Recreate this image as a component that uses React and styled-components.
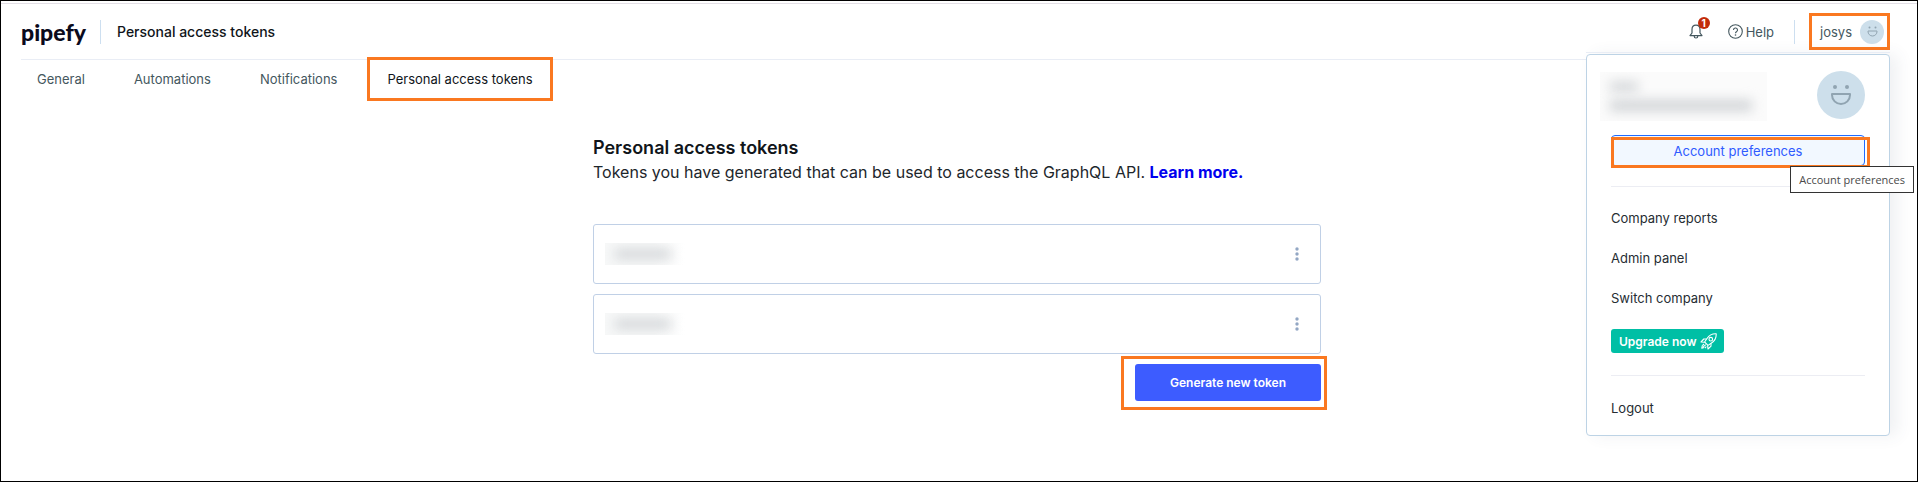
import React from 'react'
import styled, { createGlobalStyle } from 'styled-components'

const GlobalStyle = createGlobalStyle`
  * { box-sizing: border-box; }
  body {
    margin: 0;
    background-color: #fff;
    font-family: Inter, "Liberation Sans", sans-serif;
    color: #10151a;
  }
  button { font-family: inherit; cursor: pointer; }
  a { text-decoration: none; }
`

const Page = styled.div`
  position: relative;
  min-height: 100vh;
  border: 1px solid #000;
  padding: 2px 4px 0 0;
`

const TopLine = styled.div`
  height: 1px;
  margin-right: -4px;
  background-color: #e3dfe6;
`

const Header = styled.header`
  display: flex;
  align-items: center;
  height: 56px;
  margin: 0 23px 0 20px;
  border-bottom: 1px solid #e9edf5;
`

const Logo = styled.a`
  width: 79px;
  font-family: Lato, sans-serif;
  font-size: 23px;
  font-weight: 900;
  line-height: 30px;
  color: #0b0a1c;
`

const Divider = styled.span`
  width: 1px;
  height: 24px;
  background-color: #cddff0;
`

const PageName = styled.h1`
  flex: 1;
  margin: 0 0 0 16px;
  font-size: 14px;
  font-weight: 500;
  line-height: 20px;
`

const BellButton = styled.button`
  position: relative;
  display: flex;
  padding: 0;
  margin-right: 25px;
  border: none;
  background: none;
`

const Badge = styled.span`
  position: absolute;
  top: -7px;
  right: -7px;
  width: 12px;
  height: 12px;
  border-radius: 50%;
  background-color: #c22b0a;
  color: #fff;
  font-size: 10px;
  font-weight: 700;
  line-height: 12px;
  text-align: center;
`

const HelpLink = styled.a`
  display: flex;
  align-items: center;
  gap: 3px;
  margin-right: 20px;
  font-size: 13px;
  line-height: 20px;
  color: #44575e;
`

const UserButton = styled.button`
  display: flex;
  align-items: center;
  gap: 8px;
  height: 37px;
  margin-left: 14px;
  padding: 0 3px 0 8px;
  border: 3px solid #fa7820;
  background: none;
  font-size: 13px;
  line-height: 20px;
  color: #44575e;
`

const Avatar = styled.span`
  display: flex;
  align-items: center;
  justify-content: center;
  width: ${({ $size }) => $size}px;
  height: ${({ $size }) => $size}px;
  border-radius: 50%;
  background-color: #cddfeb;
`

const Tabs = styled.nav`
  display: flex;
  align-items: center;
  height: 44px;
  margin: -3px 20px 0;
`

const Tab = styled.a`
  padding: 0 16px;
  margin-right: 17px;
  font-size: 13px;
  line-height: 20px;
  color: #44575e;
`

const ActiveTab = styled(Tab)`
  margin: 0 0 0 -3px;
  padding: 9px 17px;
  border: 3px solid #fa7820;
  background-color: #fff;
  color: #10151a;
`

const Content = styled.main`
  width: 728px;
  margin: 35px auto 0;
`

const Title = styled.h2`
  margin: 0;
  font-size: 18px;
  font-weight: 600;
  line-height: 24px;
`

const Description = styled.p`
  margin: 0 0 40px;
  font-size: 16px;
  line-height: 24px;
  color: #1d262b;

  a {
    font-weight: 700;
    color: #0000ee;
  }
`

const TokenList = styled.ul`
  display: grid;
  gap: 10px;
  margin: 0;
  padding: 0;
  list-style: none;
`

const TokenRow = styled.li`
  display: flex;
  align-items: center;
  justify-content: space-between;
  height: 60px;
  padding: 0 11px;
  border: 1px solid #c0d0e6;
  border-radius: 3px;
`

const HiddenName = styled.div`
  width: 80px;
  height: 22px;
  overflow: hidden;
  background: linear-gradient(90deg, #f7f8f8 60%, #fff);

  &::after {
    content: "";
    display: block;
    width: 56px;
    height: 10px;
    margin: 6px 10px;
    background-color: #d3d6d9;
    filter: blur(6px);
  }
`

const MenuButton = styled.button`
  display: flex;
  justify-content: center;
  width: 24px;
  padding: 0;
  border: none;
  background: none;
`

const GenerateArea = styled.div`
  width: 206px;
  margin: 2px -6px 0 auto;
  padding: 5px 3px 6px 11px;
  border: 3px solid #fa7820;
`

const GenerateButton = styled.button`
  display: block;
  width: 100%;
  height: 37px;
  border: none;
  border-radius: 3px;
  background-color: #3d5cff;
  color: #fff;
  font-size: 12px;
  font-weight: 600;
`

const UserMenu = styled.aside`
  position: absolute;
  top: 53px;
  right: 27px;
  width: 304px;
  padding: 16px 24px 17px;
  border: 1px solid #bdd3e5;
  border-radius: 4px;
  background-color: #fff;
  box-shadow: 8px 0 16px rgba(60, 80, 100, 0.08);

  &::before {
    content: "";
    position: absolute;
    top: -3px;
    left: -1px;
    right: -1px;
    height: 1px;
    background-color: #e9edf5;
  }
`

const Profile = styled.div`
  display: flex;
  justify-content: space-between;
  margin-left: -11px;
`

const HiddenProfile = styled.div`
  width: 167px;
  height: 49px;
  margin-top: 1px;
  padding: 10px;
  overflow: hidden;
  background-color: #fbfbfb;

  &::before,
  &::after {
    content: "";
    display: block;
    width: 28px;
    height: 9px;
    background-color: #d0d3d6;
    filter: blur(6px);
  }

  &::after {
    width: 142px;
    height: 11px;
    margin-top: 9px;
  }
`

const PreferencesArea = styled.div`
  position: relative;
  margin-top: 14px;

  &::after {
    content: "";
    position: absolute;
    top: 2px;
    left: 0;
    right: -5px;
    bottom: -2px;
    border: 3px solid #fa7820;
    pointer-events: none;
  }
`

const PreferencesButton = styled.button`
  display: block;
  width: 100%;
  height: 31px;
  padding: 0;
  border: 1px solid #1f6bff;
  border-radius: 4px;
  background-color: #f2f8ff;
  color: #2f5bff;
  font-size: 13px;
  line-height: 20px;
`

const Tooltip = styled.span`
  position: absolute;
  top: 31px;
  right: -49px;
  z-index: 1;
  padding: 2px 8px;
  border: 1px solid #333;
  background-color: #fff;
  color: #4a4a4a;
  font-family: "Open Sans", sans-serif;
  font-size: 11px;
  line-height: 21px;
  white-space: nowrap;
`

const Line = styled.hr`
  height: 1px;
  margin: ${({ $margin }) => $margin};
  border: none;
  background-color: #ecedf3;
`

const MenuLinks = styled.nav`
  display: grid;
  gap: 20px;
  justify-items: start;
`

const MenuLink = styled.a`
  font-size: 13px;
  line-height: 20px;
  color: #262d33;
`

const Upgrade = styled.button`
  display: flex;
  align-items: center;
  gap: 3px;
  height: 24px;
  margin-top: 21px;
  padding: 0 7px 0 8px;
  border: none;
  border-radius: 3px;
  background-color: #00bfa5;
  color: #fff;
  font-size: 12px;
  font-weight: 600;
`

const Face = ({ size }) => (
  <svg width={size} height={size} viewBox="0 0 22 22" fill="none" stroke="#90a4b1" strokeWidth="2">
    <circle cx="5" cy="3" r="2" fill="#90a4b1" stroke="none" />
    <circle cx="17" cy="3" r="2" fill="#90a4b1" stroke="none" />
    <path d="M2 10h18v1a9 9 0 0 1-18 0z" strokeLinejoin="round" />
  </svg>
)

const Bell = () => (
  <svg width="14" height="15" viewBox="0 0 14 15" fill="none" stroke="#44575e" strokeWidth="1.2">
    <path d="M7 1.2C4.2 1.2 3 3 3 5.4V9L1 11.6h12L11 9V5.4C11 3 9.8 1.2 7 1.2zM5.2 12.2a1.8 1.8 0 0 0 3.6 0" strokeLinejoin="round" />
  </svg>
)

const Question = () => (
  <svg width="15" height="15" viewBox="0 0 15 15" fill="none" stroke="#44575e" strokeWidth="1.1">
    <circle cx="7.5" cy="7.5" r="6.8" />
    <path d="M5.5 6a2 2 0 1 1 3 1.7c-.7.4-1 .7-1 1.5" />
    <circle cx="7.5" cy="11" r=".8" fill="#44575e" stroke="none" />
  </svg>
)

const Dots = () => (
  <svg width="4" height="14" viewBox="0 0 4 14" fill="#93a7c4">
    <circle cx="2" cy="2" r="1.7" />
    <circle cx="2" cy="7" r="1.7" />
    <circle cx="2" cy="12" r="1.7" />
  </svg>
)

const Rocket = () => (
  <svg width="17" height="17" viewBox="0 0 17 17" fill="none" stroke="#fff" strokeWidth="1.1" strokeLinejoin="round">
    <path d="M16.2.8c-4-.2-7 1.4-9.2 4.7L4.6 9 8 12.4l3.5-2.4c3.3-2.2 4.9-5.2 4.7-9.2z" />
    <circle cx="10.8" cy="6.2" r="1.8" />
    <path d="M6.6 6H3.8L1 9l3.6.3M11 10.4v2.8L8 16l-.4-3.6M4 11l-1.4 1.4M3.2 13.8l2.6-2.2M5 15.2l1.3-1.7M2.4 12.4l-.6 2.8 2.4-.8" />
  </svg>
)

const tabs = ['General', 'Automations', 'Notifications']
const menuLinks = ['Company reports', 'Admin panel', 'Switch company']
const tokens = [1, 2]

const App = () => {
  return (
    <Page>
      <GlobalStyle />
      <TopLine />
      <Header>
        <Logo href="#">pipefy</Logo>
        <Divider />
        <PageName>Personal access tokens</PageName>
        <BellButton aria-label="Notifications">
          <Bell />
          <Badge>1</Badge>
        </BellButton>
        <HelpLink href="#">
          <Question />
          Help
        </HelpLink>
        <Divider />
        <UserButton>
          josys
          <Avatar $size={24}><Face size={11} /></Avatar>
        </UserButton>
      </Header>
      <Tabs>
        {tabs.map((tab) => (
          <Tab href="#" key={tab}>{tab}</Tab>
        ))}
        <ActiveTab href="#" aria-current="page">Personal access tokens</ActiveTab>
      </Tabs>
      <Content>
        <Title>Personal access tokens</Title>
        <Description>
          Tokens you have generated that can be used to access the GraphQL API. <a href="#">Learn more.</a>
        </Description>
        <TokenList>
          {tokens.map((token) => (
            <TokenRow key={token}>
              <HiddenName />
              <MenuButton aria-label="Token options"><Dots /></MenuButton>
            </TokenRow>
          ))}
        </TokenList>
        <GenerateArea>
          <GenerateButton>Generate new token</GenerateButton>
        </GenerateArea>
      </Content>
      <UserMenu>
        <Profile>
          <HiddenProfile />
          <Avatar $size={48}><Face size={22} /></Avatar>
        </Profile>
        <PreferencesArea>
          <PreferencesButton>Account preferences</PreferencesButton>
          <Tooltip role="tooltip">Account preferences</Tooltip>
        </PreferencesArea>
        <Line $margin="20px 0 21px" />
        <MenuLinks>
          {menuLinks.map((link) => (
            <MenuLink href="#" key={link}>{link}</MenuLink>
          ))}
        </MenuLinks>
        <Upgrade>Upgrade now <Rocket /></Upgrade>
        <Line $margin="22px 0 21px" />
        <MenuLink href="#">Logout</MenuLink>
      </UserMenu>
    </Page>
  )
}

export default App
